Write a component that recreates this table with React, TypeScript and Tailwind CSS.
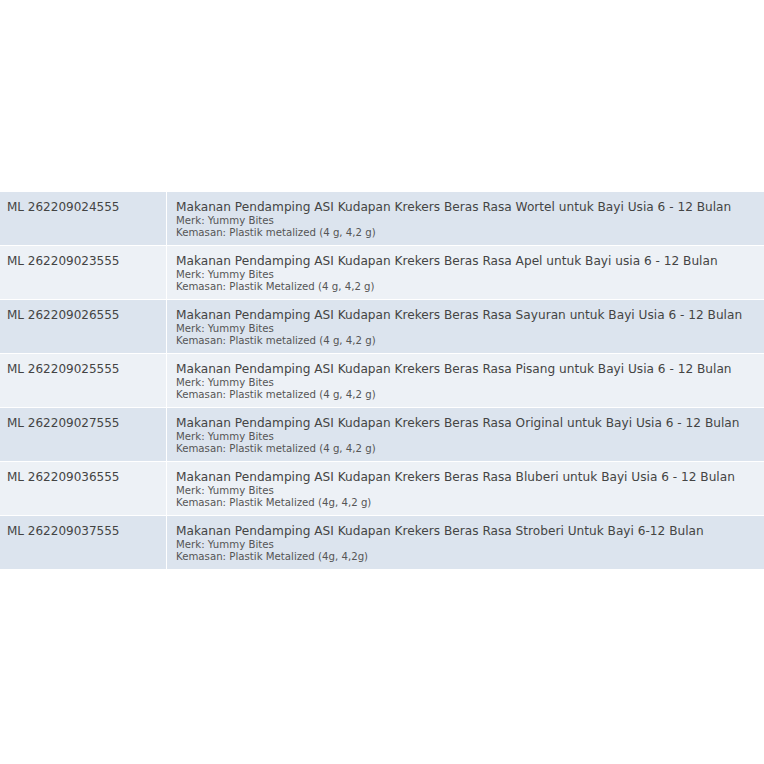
import React from 'react';

const rows = [
    {
        code: 'ML 262209024555',
        name: 'Makanan Pendamping ASI Kudapan Krekers Beras Rasa Wortel untuk Bayi Usia 6 - 12 Bulan',
        pack: 'Kemasan: Plastik metalized (4 g, 4,2 g)',
    },
    {
        code: 'ML 262209023555',
        name: 'Makanan Pendamping ASI Kudapan Krekers Beras Rasa Apel untuk Bayi usia 6 - 12 Bulan',
        pack: 'Kemasan: Plastik Metalized (4 g, 4,2 g)',
    },
    {
        code: 'ML 262209026555',
        name: 'Makanan Pendamping ASI Kudapan Krekers Beras Rasa Sayuran untuk Bayi Usia 6 - 12 Bulan',
        pack: 'Kemasan: Plastik metalized (4 g, 4,2 g)',
    },
    {
        code: 'ML 262209025555',
        name: 'Makanan Pendamping ASI Kudapan Krekers Beras Rasa Pisang untuk Bayi Usia 6 - 12 Bulan',
        pack: 'Kemasan: Plastik metalized (4 g, 4,2 g)',
    },
    {
        code: 'ML 262209027555',
        name: 'Makanan Pendamping ASI Kudapan Krekers Beras Rasa Original untuk Bayi Usia 6 - 12 Bulan',
        pack: 'Kemasan: Plastik metalized (4 g, 4,2 g)',
    },
    {
        code: 'ML 262209036555',
        name: 'Makanan Pendamping ASI Kudapan Krekers Beras Rasa Bluberi untuk Bayi Usia 6 - 12 Bulan',
        pack: 'Kemasan: Plastik Metalized (4g, 4,2 g)',
    },
    {
        code: 'ML 262209037555',
        name: 'Makanan Pendamping ASI Kudapan Krekers Beras Rasa Stroberi Untuk Bayi 6-12 Bulan',
        pack: 'Kemasan: Plastik Metalized (4g, 4,2g)',
    },
];

const App: React.FC = () => {
    return (
        <div className="w-[764px] h-[764px] bg-white pt-[192px] font-['DejaVu_Sans',sans-serif]">
            <div className="flex flex-col gap-px">
                {rows.map((row, i) => (
                    <div key={row.code} className="flex h-[53px] gap-px">
                        <div className={`w-[166px] shrink-0 pl-[7px] pt-[7px] text-[12px] leading-[16px] text-[#444] ${i % 2 === 0 ? 'bg-[#dce4ee]' : 'bg-[#edf1f6]'}`}>
                            {row.code}
                        </div>
                        <div className={`flex-1 pl-[9px] pt-[7px] ${i % 2 === 0 ? 'bg-[#dce4ee]' : 'bg-[#edf1f6]'}`}>
                            <div className="text-[12.15px] leading-[16px] text-[#444] whitespace-nowrap">{row.name}</div>
                            <div className="text-[10.2px] leading-[12px] text-[#555]">Merk: Yummy Bites</div>
                            <div className="text-[10.2px] leading-[12px] text-[#555]">{row.pack}</div>
                        </div>
                    </div>
                ))}
            </div>
        </div>
    );
};

export default App;
